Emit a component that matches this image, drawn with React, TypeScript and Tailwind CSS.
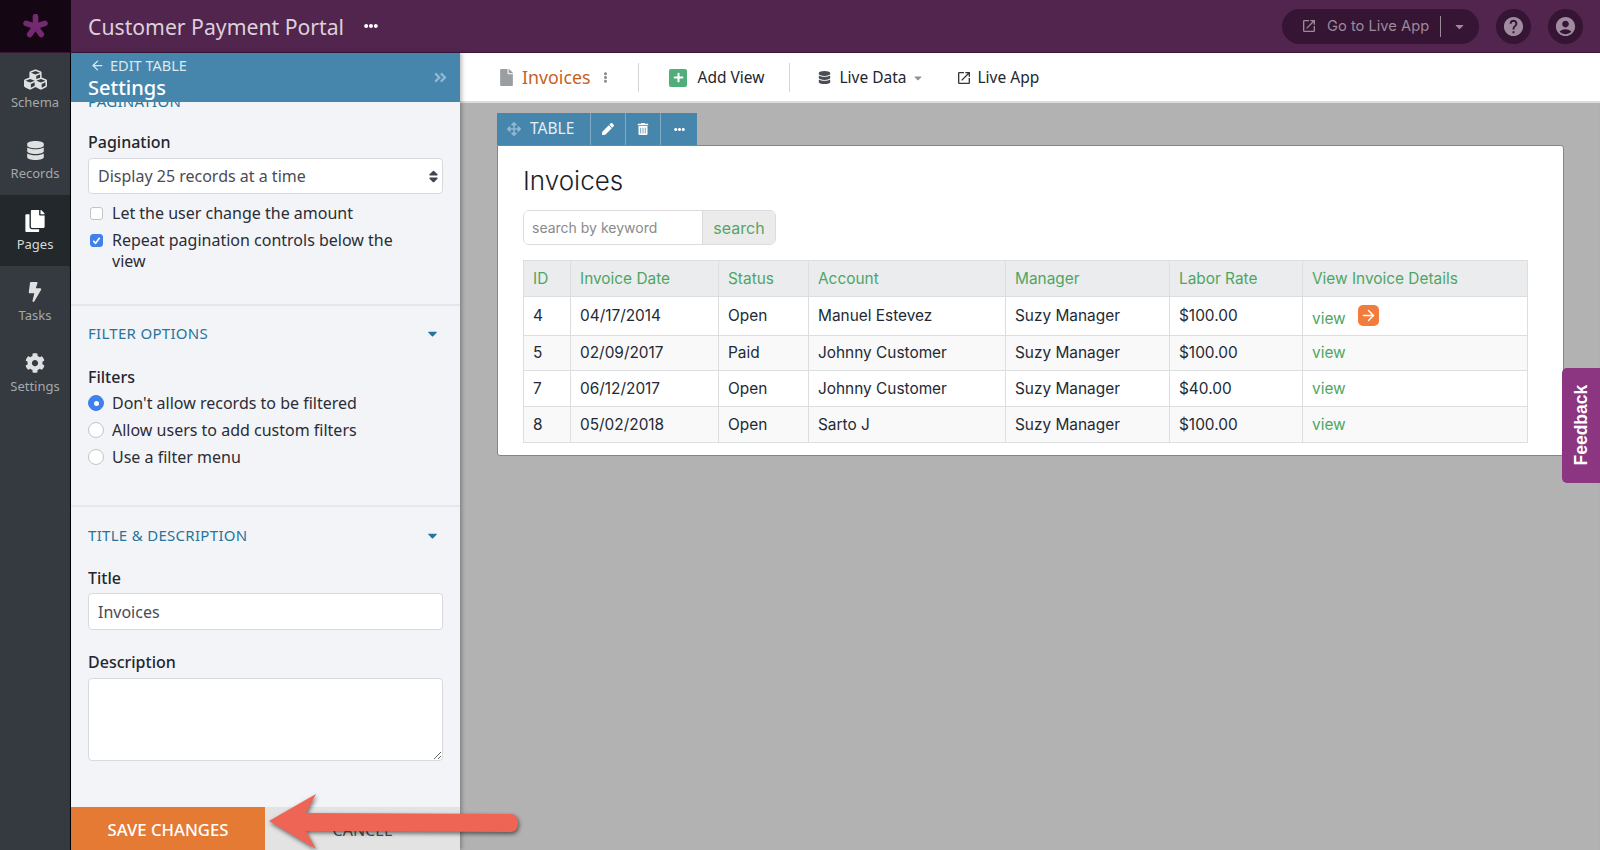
import React from "react";
import {
  FaCubes, FaDatabase, FaCopy, FaBolt, FaCog, FaEllipsisH, FaEllipsisV, FaFile,
  FaPlus, FaArrowsAlt, FaPen, FaTrashAlt, FaAngleDoubleRight, FaCaretDown, FaSort,
} from "react-icons/fa";
import { MdHelp, MdAccountCircle, MdOpenInNew } from "react-icons/md";
import { FiArrowLeft, FiArrowRight } from "react-icons/fi";

const sideItems = [
  { label: "Schema", Icon: FaCubes, size: 23 },
  { label: "Records", Icon: FaDatabase, size: 19 },
  { label: "Pages", Icon: FaCopy, size: 22, active: true },
  { label: "Tasks", Icon: FaBolt, size: 20 },
  { label: "Settings", Icon: FaCog, size: 20 },
];

const rows = [
  ["4", "04/17/2014", "Open", "Manuel Estevez", "Suzy Manager", "$100.00"],
  ["5", "02/09/2017", "Paid", "Johnny Customer", "Suzy Manager", "$100.00"],
  ["7", "06/12/2017", "Open", "Johnny Customer", "Suzy Manager", "$40.00"],
  ["8", "05/02/2018", "Open", "Sarto J", "Suzy Manager", "$100.00"],
];
const heads = ["ID", "Invoice Date", "Status", "Account", "Manager", "Labor Rate", "View Invoice Details"];
const widths = ["w-[47px]", "w-[148px]", "w-[90px]", "w-[197px]", "w-[164px]", "w-[133px]", "w-[225px]"];
const rowH = ["h-[39px]", "h-[35px]", "h-[36px]", "h-[36px]"];

function Label({ children, cls = "" }: { children: React.ReactNode; cls?: string }) {
  return <div className={`h-[22px] leading-[22px] text-[16px] font-medium text-[#23262f] ${cls}`}>{children}</div>;
}
function Section({ children, cls = "" }: { children: React.ReactNode; cls?: string }) {
  return (
    <div className={`flex h-[20px] items-center justify-between pr-[3px] text-[15px] leading-[20px] tracking-[0.3px] text-[#27759b] ${cls}`}>
      <span>{children}</span>
      <FaCaretDown size={15} className="text-[#27759b]" />
    </div>
  );
}
function Check({ on, cls = "", children }: { on?: boolean; cls?: string; children: React.ReactNode }) {
  return (
    <div className={`flex text-[16px] leading-[21px] text-[#2a2d36] ${cls}`}>
      <span className={`ml-[2px] mr-[9px] mt-[4px] flex h-[13px] w-[13px] shrink-0 items-center justify-center rounded-[3px] border ${on ? "border-[#3f80ec] bg-[#3f80ec]" : "border-[#c4c4c8] bg-white"}`}>
        {on && (
          <svg viewBox="0 0 12 12" className="h-[11px] w-[11px]" fill="none" stroke="#fff" strokeWidth="1.8">
            <path d="M2.5 6.5 5 9l4.5-6" />
          </svg>
        )}
      </span>
      <span className="w-[300px]">{children}</span>
    </div>
  );
}
function Radio({ on, cls = "", children }: { on?: boolean; cls?: string; children: React.ReactNode }) {
  return (
    <div className={`flex h-[22px] items-center text-[16px] text-[#2a2d36] ${cls}`}>
      <span className={`mr-[8px] flex h-[16px] w-[16px] shrink-0 items-center justify-center rounded-full border ${on ? "border-[#3f80ec] bg-[#3f80ec]" : "border-[#c4c4c8] bg-white"}`}>
        {on && <span className="h-[5px] w-[5px] rounded-full bg-white" />}
      </span>
      {children}
    </div>
  );
}

function Logo() {
  return (
    <svg viewBox="-12 -12 24 24" className="h-[25px] w-[25px]" stroke="#742a70" strokeWidth="5.4" strokeLinecap="round">
      {[0, 72, 144, 216, 288].map((a) => (
        <line key={a} x1="0" y1="0" x2="0" y2="-9.5" transform={`rotate(${a})`} />
      ))}
    </svg>
  );
}

export default function App() {
  return (
    <div className="relative flex h-[850px] w-[1600px] flex-col overflow-hidden bg-[#b2b2b2] font-['Noto_Sans',sans-serif]">
      {/* top bar */}
      <header className="flex h-[53px] shrink-0 items-center border-b border-[#3c1639] bg-[#52254e]">
        <div className="flex h-full w-[71px] items-center justify-center bg-[#150614]">
          <Logo />
        </div>
        <div className="ml-[17px] pt-[2px] text-[21.2px] text-[#dcd0da]">Customer Payment Portal</div>
        <FaEllipsisH size={14} className="ml-[20px] text-white" />
        <div className="ml-auto flex h-[35px] w-[197px] items-center rounded-full bg-[#361433] pl-[19px] text-[#9c8a9b]">
          <MdOpenInNew size={16} />
          <span className="ml-[10px] font-['Inter',sans-serif] text-[14.7px]">Go to Live App</span>
          <span className="ml-[11px] h-[21px] w-px bg-[#9c8a9b]" />
          <FaCaretDown size={13} className="ml-[12px]" />
        </div>
        <div className="ml-[17px] flex h-[35px] w-[35px] items-center justify-center rounded-full bg-[#361433] text-[#a08ca0]">
          <MdHelp size={23} />
        </div>
        <div className="ml-[17px] mr-[17px] flex h-[35px] w-[35px] items-center justify-center rounded-full bg-[#361433] text-[#a08ca0]">
          <MdAccountCircle size={23} />
        </div>
      </header>

      <div className="flex min-h-0 flex-1">
        {/* icon rail */}
        <nav className="w-[71px] shrink-0 border-r border-black bg-[#343a3f]">
          {sideItems.map(({ label, Icon, size, active }) => (
            <div key={label} className={`flex h-[71px] flex-col items-center pt-[14px] ${active ? "bg-[#22282c]" : ""}`}>
              <div className={`flex h-[24px] items-center ${active ? "text-white" : "text-[#dfe0e1]"}`}>
                <Icon size={size} />
              </div>
              <div className={`mt-[1px] text-[13px] leading-[20px] ${active ? "text-[#d7d8d9]" : "text-[#a5a8aa]"}`}>{label}</div>
            </div>
          ))}
        </nav>

        {/* settings panel */}
        <aside className="z-10 flex w-[389px] shrink-0 flex-col bg-[#f3f4f8] shadow-[2px_0_4px_rgba(0,0,0,0.25)]">
          <div className="flex h-[49px] shrink-0 items-center justify-between bg-[#4686ad] pl-[19px] pr-[12px]">
            <div>
              <div className="flex h-[24px] items-center pt-[1px] text-[14.5px] text-[#dbe8f0]">
                <FiArrowLeft size={15} className="mr-[5px]" />
                EDIT TABLE
              </div>
              <div className="-ml-[2px] h-[25px] text-[20px] font-medium leading-[22px] text-white">Settings</div>
            </div>
            <FaAngleDoubleRight size={15} className="text-[#8fb8d2]" />
          </div>

          <div className="min-h-0 flex-1 overflow-hidden px-[17px]">
            <div className="-mt-[11px] h-[20px] text-[15px] leading-[20px] tracking-[0.3px] text-[#27759b]">PAGINATION</div>
            <Label cls="mt-[20px]">Pagination</Label>
            <div className="mt-[5px] flex h-[36px] items-center justify-between rounded-[4px] border border-[#d8d9df] bg-white pl-[9px] pr-[1px] text-[16px] text-[#4a4c55]">
              <span>Display 25 records at a time</span>
              <FaSort size={15} className="text-[#3e4450]" />
            </div>
            <Check cls="mt-[9px]">Let the user change the amount</Check>
            <Check on cls="mt-[6px]">Repeat pagination controls below the view</Check>
            <div className="-mx-[17px] mt-[32px] h-[2px] bg-[#e6e7ec]" />
            <Section cls="mt-[17px]">FILTER OPTIONS</Section>
            <Label cls="mt-[23px]">Filters</Label>
            <Radio on cls="mt-[4px]">Don't allow records to be filtered</Radio>
            <Radio cls="mt-[5px]">Allow users to add custom filters</Radio>
            <Radio cls="mt-[5px]">Use a filter menu</Radio>
            <div className="-mx-[17px] mt-[37px] h-[2px] bg-[#e6e7ec]" />
            <Section cls="mt-[18px]">TITLE &amp; DESCRIPTION</Section>
            <Label cls="mt-[22px]">Title</Label>
            <input
              readOnly
              value="Invoices"
              className="mt-[4px] block h-[37px] w-full rounded-[4px] border border-[#d8d9df] bg-white px-[9px] text-[16px] text-[#4a4c55] outline-none"
            />
            <Label cls="mt-[21px]">Description</Label>
            <textarea readOnly className="mt-[5px] block h-[83px] w-full rounded-[4px] border border-[#d8d9df] bg-white outline-none" />
          </div>

          <div className="flex h-[43px] shrink-0 bg-[#e3e3e3]">
            <div className="flex w-[194px] items-center justify-center bg-[#e57a35] pt-[2px] text-[16.7px] font-medium text-white">SAVE CHANGES</div>
            <div className="flex flex-1 items-center justify-center pt-[2px] text-[16px] text-[#4a4c55]">CANCEL</div>
          </div>
        </aside>

        {/* main */}
        <main className="min-w-0 flex-1 shadow-[inset_0_5px_5px_-3px_rgba(0,0,0,0.15)]">
          <div className="flex h-[50px] items-center border-b-2 border-[#dcdcdc] bg-white pl-[38px] pt-[1px] text-[15.5px] text-[#23262f]">
            <FaFile size={17} className="text-[#9a9ea3]" />
            <span className="ml-[7px] text-[17.8px] text-[#c8601f]">Invoices</span>
            <FaEllipsisV size={11} className="ml-[10px] text-[#8b8f94]" />
            <span className="ml-[27px] h-[29px] w-px bg-[#d5d5d5]" />
            <span className="ml-[30px] flex h-[18px] w-[18px] items-center justify-center rounded-[2px] bg-[#4fae79] text-white">
              <FaPlus size={11} />
            </span>
            <span className="ml-[10px]">Add View</span>
            <span className="ml-[25px] h-[29px] w-px bg-[#d5d5d5]" />
            <FaDatabase size={13} className="ml-[28px] text-[#4a4d55]" />
            <span className="ml-[8px]">Live Data</span>
            <FaCaretDown size={12} className="ml-[6px] text-[#8f9296]" />
            <MdOpenInNew size={16} className="ml-[32px] text-[#33363d]" />
            <span className="ml-[5px]">Live App</span>
          </div>

          <div className="pl-[37px] pr-[36px] pt-[10px]">
            <div className="flex h-[32px] w-fit bg-[#4686ad] text-white">
              <div className="flex w-[94px] items-center border-r border-[#7fabc6] pl-[10px]">
                <FaArrowsAlt size={14} className="text-[#8fb8d2]" />
                <span className="ml-[9px] text-[15.5px] text-[#e6eff5]">TABLE</span>
              </div>
              <div className="flex w-[35px] items-center justify-center border-r border-[#7fabc6]"><FaPen size={12} /></div>
              <div className="flex w-[35px] items-center justify-center border-r border-[#7fabc6]"><FaTrashAlt size={12} /></div>
              <div className="flex w-[36px] items-center justify-center"><FaEllipsisH size={11} /></div>
            </div>
            <section className="h-[311px] rounded-b-[3px] rounded-tr-[3px] border border-[#5c8fb0] bg-white pl-[25px] pr-[35px] pt-[17px] font-['Inter',sans-serif]">
              <h1 className="text-[26px] font-light leading-[36px] text-[#1c1f27]">Invoices</h1>
              <div className="mt-[11px] flex h-[35px] w-[253px] overflow-hidden rounded-[6px] border border-[#dcdcdf] text-[14px]">
                <div className="flex w-[178px] items-center bg-white pl-[8px] text-[#8a8a8a]">search by keyword</div>
                <div className="flex flex-1 items-center justify-center border-l border-[#dcdcdf] bg-[#ebebeb] text-[16px] text-[#56a468]">search</div>
              </div>
              <table className="mt-[15px] w-[1004px] table-fixed border-collapse text-[15.4px] text-[#232a36]">
                <thead>
                  <tr className="h-[36px] bg-[#ebecee] text-left">
                    {heads.map((h, i) => (
                      <th key={h} className={`${widths[i]} border border-[#dcdee0] pl-[9px] font-normal text-[#4fa564]`}>{h}</th>
                    ))}
                  </tr>
                </thead>
                <tbody>
                  {rows.map((r, i) => (
                    <tr key={r[0]} className={`${rowH[i]} ${i % 2 ? "bg-[#f9f9f9]" : "bg-white"}`}>
                      {r.map((c, j) => (
                        <td key={j} className="border border-[#dcdee0] pl-[9px]">{c}</td>
                      ))}
                      <td className="border border-[#dcdee0] pl-[9px] text-[#4fa564]">
                        <span className="inline-flex items-center">
                          <span className={i === 0 ? "pt-[6px]" : ""}>view</span>
                          {i === 0 && (
                            <span className="ml-[12px] flex h-[21px] w-[21px] items-center justify-center rounded-[5px] bg-[#f27c3c] text-white">
                              <FiArrowRight size={17} />
                            </span>
                          )}
                        </span>
                      </td>
                    </tr>
                  ))}
                </tbody>
              </table>
            </section>
          </div>
        </main>
      </div>

      {/* feedback tab */}
      <div className="absolute left-[1562px] top-[368px] z-20 flex h-[115px] w-[38px] items-center justify-center rounded-l-[5px] bg-[#8c3580]">
        <span className="-rotate-90 font-['Liberation_Sans',sans-serif] text-[17.5px] font-bold text-white">Feedback</span>
      </div>

      {/* annotation arrow */}
      <svg className="absolute left-[260px] top-[785px] z-30 overflow-visible" width="270" height="70" viewBox="0 0 270 70" style={{ filter: "drop-shadow(1px 2px 2px rgba(0,0,0,0.55))" }}>
        <path d="M9 36 L56 9 L46 28 L250 29 Q258 29 258 38 Q258 47 250 47 L46 46 L56 64 Z" fill="#ef6555" />
      </svg>
    </div>
  );
}
